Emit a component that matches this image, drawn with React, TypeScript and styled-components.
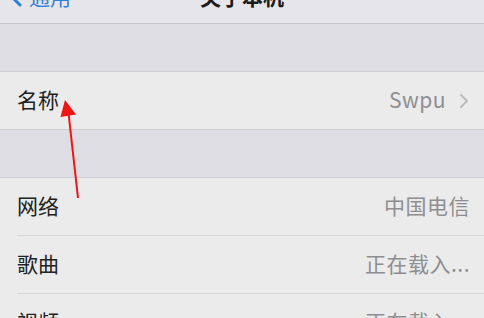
import * as React from 'react'
import styled, { createGlobalStyle } from 'styled-components'

const GlobalStyle = createGlobalStyle`
  html, body {
    margin: 0;
    padding: 0;
    background: #dedde3;
    font-family: "Noto Sans CJK SC", "Liberation Sans", sans-serif;
  }
`

const Screen = styled.div`
  position: relative;
  width: 484px;
  height: 318px;
  overflow: hidden;
  background: #dedde3;
`

// only the lower part of the nav bar is in the shot
const NavBar = styled.div`
  position: relative;
  height: 56px;
  margin-top: -32px;
  display: flex;
  align-items: center;
  justify-content: center;
  background: #e6e5ea;
  border-bottom: 1px solid #c9c8cd;
  box-sizing: border-box;
`

const BackButton = styled.div`
  position: absolute;
  left: 9px;
  top: 0;
  bottom: 0;
  display: flex;
  align-items: center;
  gap: 7px;
  color: #2f80d8;
  font-size: 21px;
`

const Title = styled.div`
  font-size: 21px;
  font-weight: 600;
  color: #1a1a1a;
`

const Gap = styled.div<{ height: number }>`
  height: ${ ({ height }) => height }px;
  border-bottom: 1px solid #cfced3;
`

const Group = styled.div`
  background: #ebebeb;
  border-bottom: 1px solid #cfced3;
`

const Row = styled.div<{ last?: boolean }>`
  height: 57px;
  display: flex;
  align-items: center;
  padding-right: 14px;
  margin-left: 17px;
  border-bottom: ${ ({ last }) => last ? 'none' : '1px solid #d6d6d8' };
`

const Label = styled.span`
  flex: 1;
  font-size: 21px;
  color: #222;
  margin-top: -3px;
`

const Value = styled.span`
  font-size: 21px;
  color: #8e8e92;
  letter-spacing: 0.5px;
  margin-top: -3px;
`

const Chevron = styled.svg`
  margin-left: 13px;
  margin-right: 1px;
  width: 10px;
  height: 16px;
`

const Arrow = styled.svg`
  position: absolute;
  left: 0;
  top: 0;
  pointer-events: none;
`

const BackIcon = () => (
  <svg width='13' height='22' viewBox='0 0 13 22'>
    <path d='M11 2 L2 11 L11 20' fill='none' stroke='#2f80d8' strokeWidth='3' strokeLinecap='round' strokeLinejoin='round' />
  </svg>
)

export default function App() {
  return (
    <Screen>
      <GlobalStyle />
      <NavBar>
        <BackButton>
          <BackIcon />
          <span>通用</span>
        </BackButton>
        <Title>关于本机</Title>
      </NavBar>
      <Gap height={ 47 } />
      <Group>
        <Row last>
          <Label>名称</Label>
          <Value>Swpu</Value>
          <Chevron viewBox='0 0 10 16'>
            <path d='M2 2 L8 8 L2 14' fill='none' stroke='#bcbcc0' strokeWidth='2' strokeLinecap='round' strokeLinejoin='round' />
          </Chevron>
        </Row>
      </Group>
      <Gap height={ 47 } />
      <Group>
        <Row>
          <Label>网络</Label>
          <Value>中国电信</Value>
        </Row>
        <Row>
          <Label>歌曲</Label>
          <Value>正在载入...</Value>
        </Row>
        <Row>
          <Label>视频</Label>
          <Value>正在载入...</Value>
        </Row>
      </Group>
      <Arrow width='484' height='318' viewBox='0 0 484 318'>
        <line x1='78' y1='198' x2='68.5' y2='113' stroke='#f01414' strokeWidth='2' />
        <polygon points='65,100 60.5,117 76,114.5' fill='#f01414' />
      </Arrow>
    </Screen>
  )
}
